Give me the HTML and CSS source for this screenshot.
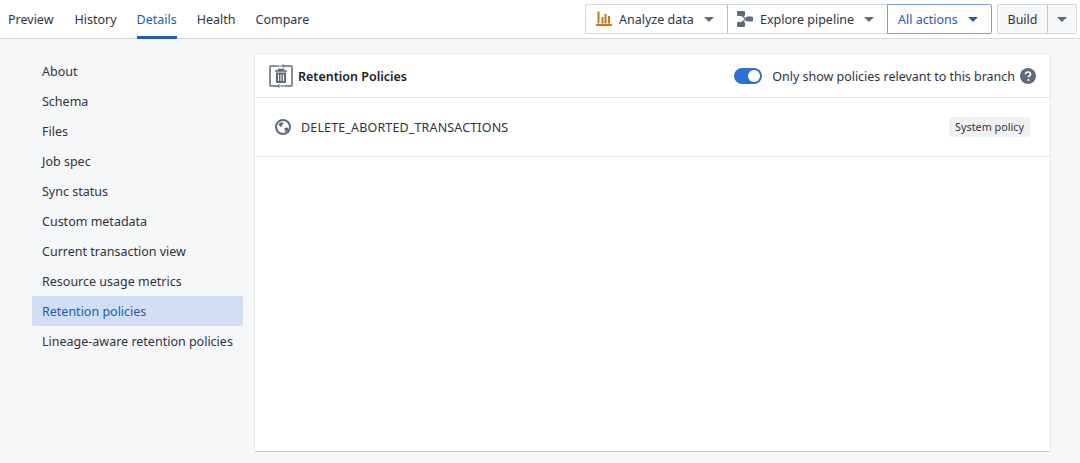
FILE: index.html
```html
<!DOCTYPE html>
<html>
  <head>
    <title>Retention policies</title>
    <link rel="stylesheet" href="styles.css">
  </head>

  <body>
    <header class="topbar">
      <nav class="tabs">
        <a class="tab">Preview</a>
        <a class="tab">History</a>
        <a class="tab active">Details</a>
        <a class="tab">Health</a>
        <a class="tab">Compare</a>
      </nav>
      <div class="actions">
        <div class="btn-group">
          <button class="btn btn-analyze">
            <svg class="icon" width="16" height="16" viewBox="0 0 16 16" fill="#c87619">
              <rect x="0" y="13" width="16" height="2" rx="0.5"/>
              <rect x="1.5" y="0.500" width="2" height="12"/>
              <rect x="5.500" y="6" width="2" height="6.500"/>
              <rect x="8.500" y="3" width="2" height="9.500"/>
              <rect x="12" y="5" width="2" height="7.500"/>
            </svg>
            Analyze data
            <span class="caret"></span>
          </button>
          <button class="btn btn-explore">
            <svg class="icon" width="16" height="16" viewBox="0 0 16 16" fill="#5f6b7c">
              <rect x="0" y="0" width="8" height="5" rx="1"/>
              <rect x="0" y="11" width="8" height="5" rx="1"/>
              <rect x="9" y="5.500" width="7" height="5" rx="1"/>
              <path d="M4 4 L9 8 L4 12" fill="none" stroke="#5f6b7c" stroke-width="1.500"/>
            </svg>
            Explore pipeline
            <span class="caret"></span>
          </button>
          <button class="btn btn-all">
            All actions
            <span class="caret"></span>
          </button>
        </div>
        <div class="btn-group build-group">
          <button class="btn btn-build">Build</button>
          <button class="btn btn-more"><span class="caret"></span></button>
        </div>
      </div>
    </header>

    <div class="page">
      <ul class="sidenav">
        <li>About</li>
        <li>Schema</li>
        <li>Files</li>
        <li>Job spec</li>
        <li>Sync status</li>
        <li>Custom metadata</li>
        <li>Current transaction view</li>
        <li>Resource usage metrics</li>
        <li class="selected">Retention policies</li>
        <li>Lineage-aware retention policies</li>
      </ul>

      <main class="panel">
        <div class="panel-head">
          <svg class="head-icon" width="24" height="24" viewBox="0 0 24 24" fill="none" stroke="#5f6b7c">
            <path d="M8 2H2a1 1 0 0 0-1 1v18a1 1 0 0 0 1 1h8M16 22h6a1 1 0 0 0 1-1V3a1 1 0 0 0-1-1h-8" stroke-width="1.500"/>
            <path d="M8 2h7M13.500 0.500L15.500 2l-2 1.500M9 22h7M10.500 20.500L8.500 22l2 1.500" stroke-width="1"/>
            <path d="M6 7h12M9.500 7V5.500h5V7" stroke-width="1.500"/>
            <path d="M7 8.500h10V18a1 1 0 0 1-1 1H8a1 1 0 0 1-1-1z" fill="#5f6b7c" stroke="none"/>
            <path d="M9.500 10.500v6.500M12 10.500v6.500M14.500 10.500v6.500" stroke="#fff" stroke-width="1"/>
          </svg>
          <h2>Retention Policies</h2>
          <label class="switch-row">
            <span class="switch"><span class="knob"></span></span>
            Only show policies relevant to this branch
          </label>
          <svg class="help" width="16" height="16" viewBox="0 0 16 16">
            <circle cx="8" cy="8" r="8" fill="#5f6b7c"/>
            <path d="M5.500 6.200C5.600 4.800 6.600 4 8 4s2.500.8 2.500 2.100c0 1-.6 1.500-1.300 2-.5.3-.7.6-.7 1.200" fill="none" stroke="#fff" stroke-width="1.700"/>
            <circle cx="8.400" cy="12" r="1.100" fill="#fff"/>
          </svg>
        </div>
        <div class="policy-row">
          <svg class="globe" width="16" height="16" viewBox="0 0 16 16">
            <circle cx="8" cy="8" r="7" fill="#fff" stroke="#5f6b7c" stroke-width="2"/>
            <path d="M3.500 5.500l2-2 2.500 0 .5 1.500-1.500 1-.5 2-1.500-.5zM9 9.500l2.500-1 2 .5-1 3-2 1.500-.5-2.500z" fill="#5f6b7c"/>
          </svg>
          <span class="policy-name">DELETE_ABORTED_TRANSACTIONS</span>
          <span class="tag">System policy</span>
        </div>
      </main>
    </div>
  </body>
</html>
```

FILE: styles.css
```css
* {
  box-sizing: border-box;
}
html,
body {
  height: 100%;
}
body {
  margin: 0;
  overflow: hidden;
  background: #f6f7f9;
  color: #1c2127;
  font-family: "Noto Sans", sans-serif;
  font-size: 12.5px;
}

.topbar {
  display: flex;
  justify-content: space-between;
  height: 39px;
  padding: 4px 3px 0 8px;
  background: #fff;
  border-bottom: 1px solid #d3d8de;
}
.tabs {
  display: flex;
  gap: 20px;
  margin-top: -4px;
}
.tab {
  height: 39px;
  line-height: 40px;
  color: #2f343c;
}
.tab:first-child {
  margin-right: 1px;
}
.tab.active {
  color: #215db0;
  border-bottom: 3px solid #215db0;
}

.actions {
  display: flex;
  gap: 5px;
}
.btn-group {
  display: flex;
  height: 30px;
}
.btn {
  display: flex;
  align-items: center;
  height: 30px;
  padding: 0 13px 0 10px;
  background: #fff;
  border: 1px solid #d3d8de;
  border-right: 0;
  color: #2f343c;
  font: inherit;
}
.btn .icon {
  margin-right: 7px;
}
.caret {
  display: block;
  width: 0;
  height: 0;
  margin-left: auto;
  border-left: 5px solid transparent;
  border-right: 5px solid transparent;
  border-top: 5px solid #5f6b7c;
}
.btn-analyze {
  width: 142px;
  border-radius: 2px 0 0 2px;
}
.btn-explore {
  width: 160px;
  padding-left: 9px;
  border-left-color: #b5bbc3;
}
.btn-all {
  width: 105px;
  color: #215db0;
  border: 1px solid #7f9fd0;
  border-radius: 0 2px 2px 0;
}
.btn-all .caret {
  border-top-color: #215db0;
}
.build-group .btn {
  background: #f6f7f9;
}
.btn-build {
  width: 50px;
  justify-content: center;
  padding: 0;
  border-radius: 2px 0 0 2px;
}
.btn-more {
  width: 30px;
  justify-content: center;
  padding: 0;
  border-left-color: #c5cbd3;
  border-right: 1px solid #d3d8de;
  border-radius: 0 2px 2px 0;
}
.btn-more .caret {
  margin: 0;
}

.page {
  display: flex;
  height: calc(100% - 39px);
  padding: 14px 29px 11px 32px;
}
.sidenav {
  width: 211px;
  margin: 3px 11px 0 0;
  padding: 0;
  list-style: none;
}
.sidenav li {
  height: 30px;
  padding-left: 10px;
  line-height: 32px;
  border-radius: 2px;
  color: #2f343c;
  white-space: nowrap;
}
.sidenav .selected {
  background: #d1def1;
  color: #215db0;
}

.panel {
  flex: 1;
  background: #fff;
  border: 1px solid #e5e8eb;
  border-bottom-color: #c5cbd3;
  border-radius: 2px;
}
.panel-head {
  display: flex;
  align-items: center;
  height: 44px;
  padding: 1px 14px 0;
  border-bottom: 1px solid #e1e4e8;
}
.head-icon {
  margin-right: 5px;
}
h2 {
  margin: 0;
  font-size: 12.5px;
  font-weight: 600;
}
.switch-row {
  display: flex;
  align-items: center;
  margin-left: auto;
  color: #2f343c;
  letter-spacing: -0.02px;
}
.switch {
  display: flex;
  justify-content: flex-end;
  align-items: center;
  width: 28px;
  height: 16px;
  margin-right: 10px;
  padding: 2px;
  border-radius: 8px;
  background: #2d72d2;
}
.knob {
  width: 12px;
  height: 12px;
  border-radius: 50%;
  background: #fff;
}
.help {
  margin-left: 5px;
}
.policy-row {
  display: flex;
  align-items: center;
  height: 59px;
  padding: 0 20px 0 20px;
  border-bottom: 1px solid #e1e4e8;
}
.globe {
  margin-right: 10px;
}
.policy-name {
  color: #2f343c;
  letter-spacing: 0.15px;
}
.tag {
  margin-left: auto;
  padding: 0 6px;
  height: 20px;
  line-height: 20px;
  font-size: 10.8px;
  background: #eff1f4;
  border-radius: 2px;
  color: #2f343c;
}
```
